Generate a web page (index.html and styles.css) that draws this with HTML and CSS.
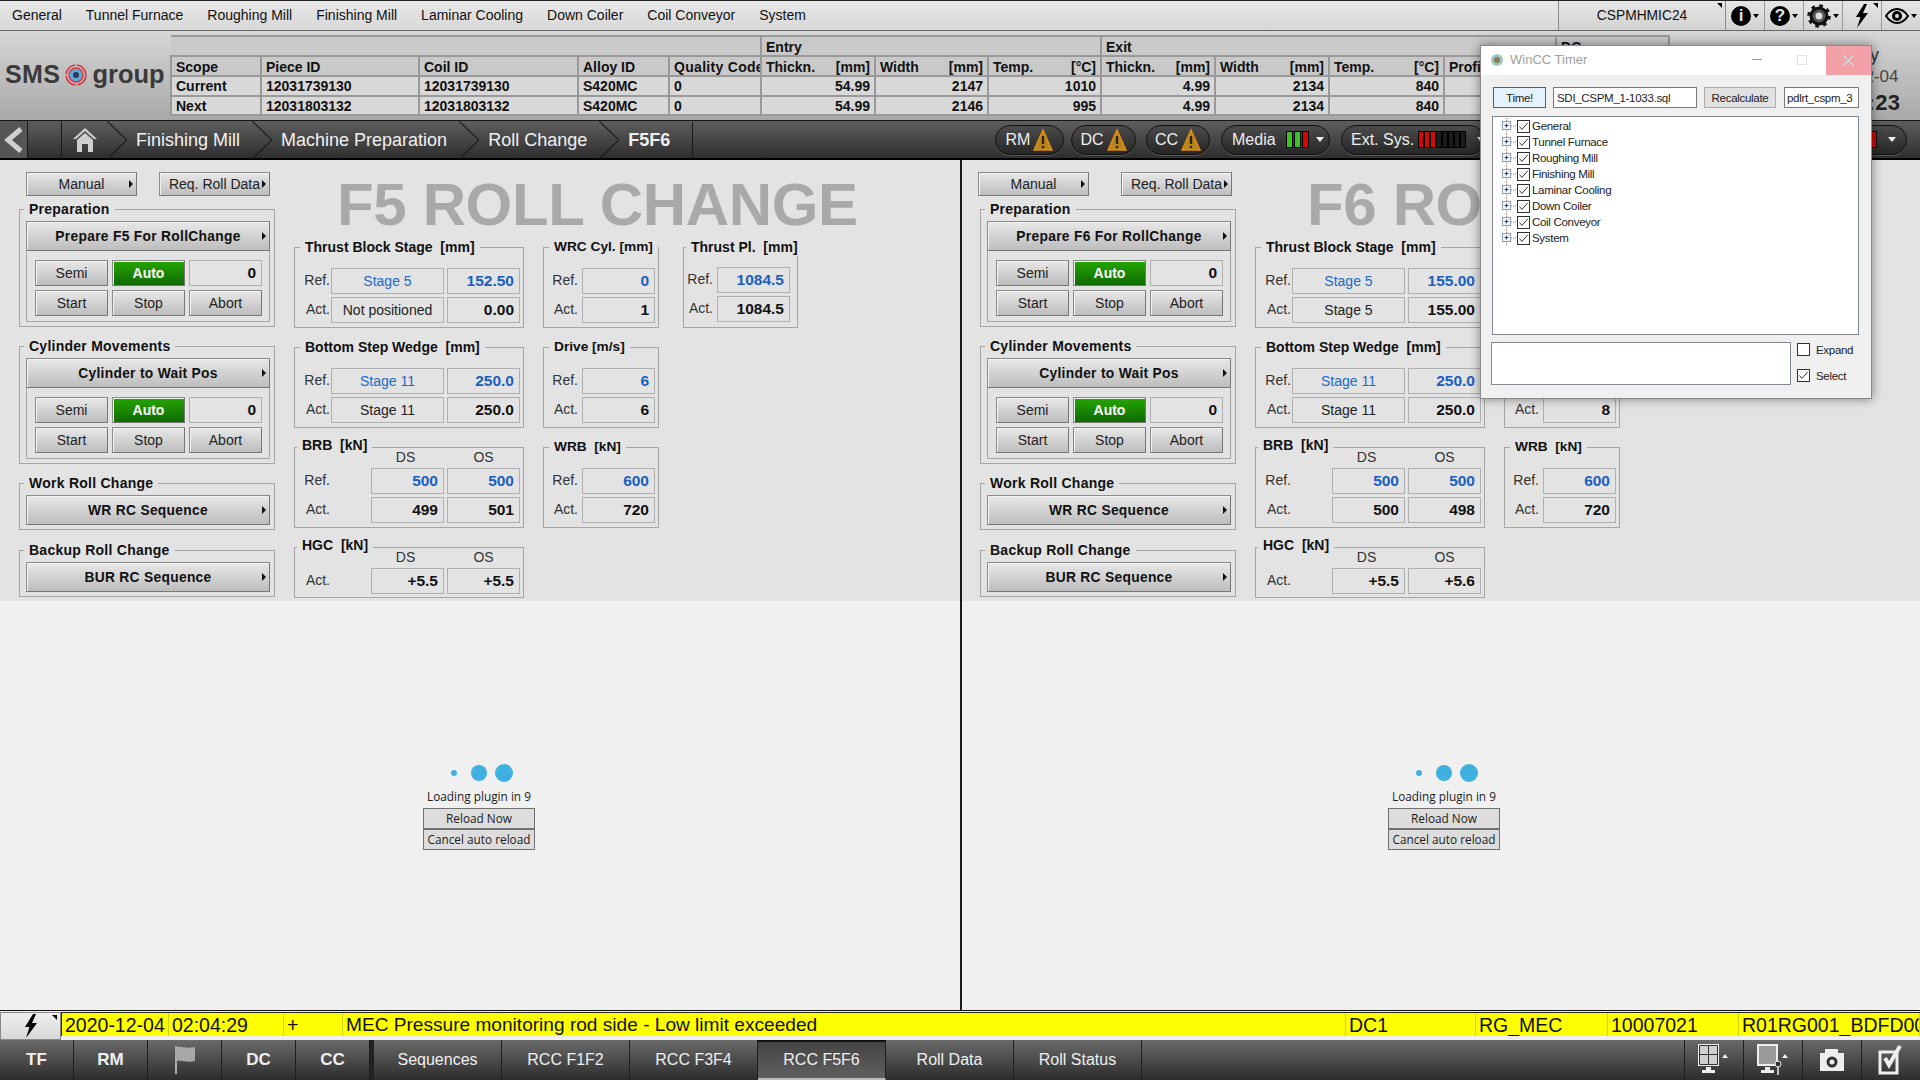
FILE: index.html
```html
<!DOCTYPE html>
<html lang="en">
<head>
<meta charset="utf-8">
<title>F5F6 Roll Change</title>
<link rel="stylesheet" href="styles.css">
</head>
<body>
<svg class="defs" width="0" height="0" aria-hidden="true">
  <symbol id="warn" viewBox="0 0 20 22"><path d="M10 1 19 21H1Z" fill="#b9851c" stroke="#e08a12" stroke-width="1.5"/><path d="M10 7v8" stroke="#2b2410" stroke-width="2.4"/><circle cx="10" cy="18" r="1.3" fill="#2b2410"/></symbol>
  <symbol id="bolt" viewBox="0 0 14 24"><path d="M9 0 1 13h4.500L2 24 13 9H8L12 0Z" fill="#000"/></symbol>
  <symbol id="tree" viewBox="0 0 14 16"><path d="M4.500 0v3.500M4.500 12.500V16M9 8h5" stroke="#888" stroke-dasharray="1 1" fill="none"/><rect x=".5" y="3.500" width="8" height="8" fill="#f4f4f4" stroke="#8f9db0"/><path d="M2.500 7.500h4M4.500 5.500v4" stroke="#2a3f90"/></symbol>
  <symbol id="chk" viewBox="0 0 13 13"><rect x=".5" y=".5" width="12" height="12" fill="#fff" stroke="#333"/><path d="M2.500 6.500 5 9.500 10.500 3" fill="none" stroke="#333"/></symbol>
  <symbol id="chev" viewBox="0 0 20 38"><path d="M0 0 20 19 0 38" fill="none" stroke="#1c1c1c" stroke-width="1.200"/></symbol>
</svg>
<div class="app">
  <header class="menu">
    <a class="mi">General</a><a class="mi">Tunnel Furnace</a><a class="mi">Roughing Mill</a><a class="mi">Finishing Mill</a><a class="mi">Laminar Cooling</a><a class="mi">Down Coiler</a><a class="mi">Coil Conveyor</a><a class="mi">System</a>
    <div class="host"><span>CSPMHMIC24</span></div>
    <div class="tool"><span class="round">i</span><i class="dn"></i></div>
    <div class="tool"><span class="round">?</span><i class="dn"></i></div>
    <div class="tool"><svg width="24" height="24" viewBox="0 0 24 24"><circle cx="12" cy="12" r="8" fill="#555" stroke="#111" stroke-width="3"/><circle cx="12" cy="12" r="10" fill="none" stroke="#111" stroke-width="3.500" stroke-dasharray="3.500 4.350"/><circle cx="12" cy="12" r="3.500" fill="#ddd"/></svg><i class="dn"></i></div>
    <div class="tool tool-corner"><svg width="14" height="24"><use href="#bolt"/></svg></div>
    <div class="tool"><svg width="24" height="16" viewBox="0 0 24 16"><path d="M1 8C5 2 9 1 12 1s7 1 11 7c-4 6-8 7-11 7S5 14 1 8Z" fill="none" stroke="#000" stroke-width="2"/><circle cx="12" cy="8" r="5" fill="#000"/><circle cx="12" cy="8" r="2" fill="#ddd"/></svg><i class="dn"></i></div>
  </header>

  <section class="band">
    <div class="logo">
      <span>SMS</span>
      <svg width="22" height="22" viewBox="0 0 22 22"><circle cx="11" cy="11" r="10" fill="none" stroke="#d8343c" stroke-width="1.600" stroke-dasharray="14 2"/><circle cx="11" cy="11" r="7" fill="#5fa8dc" stroke="#d8343c" stroke-width="1.500"/><circle cx="11" cy="11" r="3" fill="#2a3a50"/></svg>
      <span>group</span>
    </div>
    <table class="info">
      <colgroup><col class="c90"><col class="c158"><col class="c159"><col class="c91"><col class="c92"><col class="c114"><col class="c113"><col class="c113"><col class="c114"><col class="c114"><col class="c115"><col class="c112"><col class="c113"></colgroup>
      <tr class="g"><td colspan="5"></td><td colspan="3">Entry</td><td colspan="4">Exit</td><td>DC</td></tr>
      <tr class="h"><td>Scope</td><td>Piece ID</td><td>Coil ID</td><td>Alloy ID</td><td class="qc">Quality Code</td>
        <td><div class="hu"><span>Thickn.</span><span>[mm]</span></div></td><td><div class="hu"><span>Width</span><span>[mm]</span></div></td><td><div class="hu"><span>Temp.</span><span>[°C]</span></div></td>
        <td><div class="hu"><span>Thickn.</span><span>[mm]</span></div></td><td><div class="hu"><span>Width</span><span>[mm]</span></div></td><td><div class="hu"><span>Temp.</span><span>[°C]</span></div></td><td>Profile</td><td></td></tr>
      <tr><td>Current</td><td>12031739130</td><td>12031739130</td><td>S420MC</td><td>0</td><td class="r">54.99</td><td class="r">2147</td><td class="r">1010</td><td class="r">4.99</td><td class="r">2134</td><td class="r">840</td><td></td><td></td></tr>
      <tr><td>Next</td><td>12031803132</td><td>12031803132</td><td>S420MC</td><td>0</td><td class="r">54.99</td><td class="r">2146</td><td class="r">995</td><td class="r">4.99</td><td class="r">2134</td><td class="r">840</td><td></td><td></td></tr>
    </table>
    <div class="clock"><div class="c1">Today</div><div class="c2">2020-12-04</div><div class="c3">02:04:23</div></div>
  </section>

  <nav class="crumbs">
    <div class="back"><svg width="20" height="26" viewBox="0 0 20 26"><path d="M17 2 4 13l13 11" fill="none" stroke="#d0d0d0" stroke-width="5"/></svg></div>
    <div class="blank"></div>
    <svg class="home" width="26" height="26" viewBox="0 0 26 26"><path d="M13 1 1 12h3l9-8 9 8h3Z" fill="#cfcfcf"/><path d="M5 13 13 6l8 7v12h-5v-8h-6v8H5Z" fill="#cfcfcf"/></svg>
    <svg class="chev" width="20" height="38"><use href="#chev"/></svg>
    <span class="cr cr-a">Finishing Mill</span>
    <svg class="chev" width="20" height="38"><use href="#chev"/></svg>
    <span class="cr cr-b">Machine Preparation</span>
    <svg class="chev" width="20" height="38"><use href="#chev"/></svg>
    <span class="cr cr-c">Roll Change</span>
    <svg class="chev" width="20" height="38"><use href="#chev"/></svg>
    <span class="cr cr-d">F5F6</span>
    <div class="pills">
      <div class="pill p-rm">RM<svg width="20" height="22"><use href="#warn"/></svg></div>
      <div class="pill p-dc">DC<svg width="20" height="22"><use href="#warn"/></svg></div>
      <div class="pill p-cc">CC<svg width="20" height="22"><use href="#warn"/></svg></div>
      <div class="pill p-media">Media<span class="bars"><b class="gr"></b><b class="gr"></b><b class="rd"></b></span><i class="dnw"></i></div>
      <div class="pill p-ext">Ext. Sys.<span class="bars"><b class="rd"></b><b class="rd"></b><b class="rd"></b><b></b><b></b><b></b><b></b><b></b></span><i class="dnw"></i></div>
      <div class="pill p-last">Drives<span class="bars"><b class="rd"></b><b class="rd"></b></span><i class="dnw"></i></div>
    </div>
  </nav>

  <main class="panes">
    <div class="pane pane-l">
      <div class="ctrl">
        <div class="left-col">
          <div class="top-btns"><div class="btn mbtn tb"><span>Manual</span></div><div class="btn mbtn tb"><span>Req. Roll Data</span></div></div>
          <div class="grp g-op g-first"><div class="lg">Preparation</div><div class="btn mbtn big"><span>Prepare F5 For RollChange</span></div>
            <div class="inner"><div class="btn">Semi</div><div class="btn auto">Auto</div><div class="fld r b">0</div><div class="btn">Start</div><div class="btn">Stop</div><div class="btn">Abort</div></div></div>
          <div class="grp g-op"><div class="lg">Cylinder Movements</div><div class="btn mbtn big"><span>Cylinder to Wait Pos</span></div>
            <div class="inner"><div class="btn">Semi</div><div class="btn auto">Auto</div><div class="fld r b">0</div><div class="btn">Start</div><div class="btn">Stop</div><div class="btn">Abort</div></div></div>
          <div class="grp g-op g-short"><div class="lg">Work Roll Change</div><div class="btn mbtn big"><span>WR RC Sequence</span></div></div>
          <div class="grp g-op g-short"><div class="lg">Backup Roll Change</div><div class="btn mbtn big"><span>BUR RC Sequence</span></div></div>
        </div>
        <div class="right-area">
          <h1 class="title">F5 ROLL CHANGE</h1>
          <div class="cols">
            <div class="col col-a">
              <div class="grp v"><div class="lg">Thrust Block Stage&nbsp; [mm]</div>
                <div class="row"><span class="l">Ref.</span><div class="fs"><div class="fld c wide blue">Stage 5</div><div class="fld r b blue">152.50</div></div></div>
                <div class="row"><span class="l">Act.</span><div class="fs"><div class="fld c wide">Not positioned</div><div class="fld r b">0.00</div></div></div></div>
              <div class="grp v"><div class="lg">Bottom Step Wedge&nbsp; [mm]</div>
                <div class="row"><span class="l">Ref.</span><div class="fs"><div class="fld c wide blue">Stage 11</div><div class="fld r b blue">250.0</div></div></div>
                <div class="row"><span class="l">Act.</span><div class="fs"><div class="fld c wide">Stage 11</div><div class="fld r b">250.0</div></div></div></div>
              <div class="grp v"><div class="lg lg-up">BRB&nbsp; [kN]</div><div class="dsos"><span>DS</span><span>OS</span></div>
                <div class="row"><span class="l">Ref.</span><div class="fs"><div class="fld r b blue">500</div><div class="fld r b blue">500</div></div></div>
                <div class="row"><span class="l">Act.</span><div class="fs"><div class="fld r b">499</div><div class="fld r b">501</div></div></div></div>
              <div class="grp v v-short"><div class="lg lg-up">HGC&nbsp; [kN]</div><div class="dsos"><span>DS</span><span>OS</span></div>
                <div class="row"><span class="l">Act.</span><div class="fs"><div class="fld r b">+5.5</div><div class="fld r b">+5.5</div></div></div></div>
            </div>
            <div class="col col-b">
              <div class="grp v"><div class="lg">WRC Cyl. [mm]</div>
                <div class="row"><span class="l">Ref.</span><div class="fld r b blue">0</div></div>
                <div class="row"><span class="l">Act.</span><div class="fld r b">1</div></div></div>
              <div class="grp v"><div class="lg">Drive [m/s]</div>
                <div class="row"><span class="l">Ref.</span><div class="fld r b blue">6</div></div>
                <div class="row"><span class="l">Act.</span><div class="fld r b">6</div></div></div>
              <div class="grp v"><div class="lg">WRB&nbsp; [kN]</div>
                <div class="row"><span class="l">Ref.</span><div class="fld r b blue">600</div></div>
                <div class="row"><span class="l">Act.</span><div class="fld r b">720</div></div></div>
            </div>
            <div class="col col-c">
              <div class="grp v"><div class="lg">Thrust Pl.&nbsp; [mm]</div>
                <div class="row"><span class="l">Ref.</span><div class="fld r b blue">1084.5</div></div>
                <div class="row"><span class="l">Act.</span><div class="fld r b">1084.5</div></div></div>
            </div>
          </div>
        </div>
      </div>
      <div class="plugin">
        <div class="dots"><i class="d1"></i><i class="d2"></i><i class="d3"></i></div>
        <div class="lp">Loading plugin in 9</div>
        <div class="pb">Reload Now</div>
        <div class="pb">Cancel auto reload</div>
      </div>
    </div>
    <div class="divider"></div>
    <div class="pane pane-r">
      <div class="ctrl">
        <div class="left-col">
          <div class="top-btns"><div class="btn mbtn tb"><span>Manual</span></div><div class="btn mbtn tb"><span>Req. Roll Data</span></div></div>
          <div class="grp g-op g-first"><div class="lg">Preparation</div><div class="btn mbtn big"><span>Prepare F6 For RollChange</span></div>
            <div class="inner"><div class="btn">Semi</div><div class="btn auto">Auto</div><div class="fld r b">0</div><div class="btn">Start</div><div class="btn">Stop</div><div class="btn">Abort</div></div></div>
          <div class="grp g-op"><div class="lg">Cylinder Movements</div><div class="btn mbtn big"><span>Cylinder to Wait Pos</span></div>
            <div class="inner"><div class="btn">Semi</div><div class="btn auto">Auto</div><div class="fld r b">0</div><div class="btn">Start</div><div class="btn">Stop</div><div class="btn">Abort</div></div></div>
          <div class="grp g-op g-short"><div class="lg">Work Roll Change</div><div class="btn mbtn big"><span>WR RC Sequence</span></div></div>
          <div class="grp g-op g-short"><div class="lg">Backup Roll Change</div><div class="btn mbtn big"><span>BUR RC Sequence</span></div></div>
        </div>
        <div class="right-area">
          <h1 class="title">F6 ROLL CHANGE</h1>
          <div class="cols">
            <div class="col col-a">
              <div class="grp v"><div class="lg">Thrust Block Stage&nbsp; [mm]</div>
                <div class="row"><span class="l">Ref.</span><div class="fs"><div class="fld c wide blue">Stage 5</div><div class="fld r b blue">155.00</div></div></div>
                <div class="row"><span class="l">Act.</span><div class="fs"><div class="fld c wide">Stage 5</div><div class="fld r b">155.00</div></div></div></div>
              <div class="grp v"><div class="lg">Bottom Step Wedge&nbsp; [mm]</div>
                <div class="row"><span class="l">Ref.</span><div class="fs"><div class="fld c wide blue">Stage 11</div><div class="fld r b blue">250.0</div></div></div>
                <div class="row"><span class="l">Act.</span><div class="fs"><div class="fld c wide">Stage 11</div><div class="fld r b">250.0</div></div></div></div>
              <div class="grp v"><div class="lg lg-up">BRB&nbsp; [kN]</div><div class="dsos"><span>DS</span><span>OS</span></div>
                <div class="row"><span class="l">Ref.</span><div class="fs"><div class="fld r b blue">500</div><div class="fld r b blue">500</div></div></div>
                <div class="row"><span class="l">Act.</span><div class="fs"><div class="fld r b">500</div><div class="fld r b">498</div></div></div></div>
              <div class="grp v v-short"><div class="lg lg-up">HGC&nbsp; [kN]</div><div class="dsos"><span>DS</span><span>OS</span></div>
                <div class="row"><span class="l">Act.</span><div class="fs"><div class="fld r b">+5.5</div><div class="fld r b">+5.6</div></div></div></div>
            </div>
            <div class="col col-b">
              <div class="grp v"><div class="lg">WRC Cyl. [mm]</div>
                <div class="row"><span class="l">Ref.</span><div class="fld r b blue">0</div></div>
                <div class="row"><span class="l">Act.</span><div class="fld r b">1</div></div></div>
              <div class="grp v"><div class="lg">Drive [m/s]</div>
                <div class="row"><span class="l">Ref.</span><div class="fld r b blue">8</div></div>
                <div class="row"><span class="l">Act.</span><div class="fld r b">8</div></div></div>
              <div class="grp v"><div class="lg">WRB&nbsp; [kN]</div>
                <div class="row"><span class="l">Ref.</span><div class="fld r b blue">600</div></div>
                <div class="row"><span class="l">Act.</span><div class="fld r b">720</div></div></div>
            </div>
          </div>
        </div>
      </div>
      <div class="plugin">
        <div class="dots"><i class="d1"></i><i class="d2"></i><i class="d3"></i></div>
        <div class="lp">Loading plugin in 9</div>
        <div class="pb">Reload Now</div>
        <div class="pb">Cancel auto reload</div>
      </div>
    </div>
  </main>

  <section class="status">
    <div class="st-btn"><svg width="14" height="24"><use href="#bolt"/></svg></div>
    <div class="st-row">
      <span class="s1">2020-12-04</span><span class="s2">02:04:29</span><span class="s3">+</span><span class="s4">MEC Pressure monitoring rod side - Low limit exceeded</span><span class="s5">DC1</span><span class="s6">RG_MEC</span><span class="s7">10007021</span><span class="s8">R01RG001_BDFD001</span>
    </div>
  </section>

  <footer class="tabs">
    <div class="tab t-s b">TF</div><div class="tab t-s b">RM</div>
    <div class="tab t-s"><svg width="22" height="28" viewBox="0 0 22 28"><path d="M2 0v28" stroke="#a8a8a8" stroke-width="2"/><path d="M3 1c6-1 8 2 18 0v14c-8 2-12-1-18 0Z" fill="#a8a8a8"/></svg></div>
    <div class="tab t-s b">DC</div><div class="tab t-s b">CC</div>
    <div class="tab-gap"></div>
    <div class="tab t-l">Sequences</div><div class="tab t-l">RCC F1F2</div><div class="tab t-l">RCC F3F4</div><div class="tab t-l active">RCC F5F6</div><div class="tab t-l">Roll Data</div><div class="tab t-l">Roll Status</div>
    <div class="tab-fill"></div>
    <div class="tab t-i"><svg width="34" height="34" viewBox="0 0 34 34"><rect x="1" y="1" width="21" height="22" fill="#eee"/><path d="M3 3h8v8H3ZM12 3h8v8h-8ZM3 12h8v9H3ZM12 12h8v9h-8Z" fill="#cfcfcf"/><path d="M2.500 2.500h18v19h-18ZM11.500 2.500v19M2.500 11.500h18" fill="none" stroke="#333"/><path d="M9 24h5v3h4v3H5v-3h4Z" fill="#eee"/><path d="M28 11l3 4h-6Z" fill="#eee"/></svg></div>
    <div class="tab t-i"><svg width="34" height="34" viewBox="0 0 34 34"><rect x="1" y="1" width="21" height="22" fill="#eee"/><rect x="3" y="3" width="17" height="18" fill="#9a9a9a"/><path d="M9 24h5v3h4v3H5v-3h4Z" fill="#eee"/><circle cx="22" cy="21" r="3" fill="#333" stroke="#eee"/><path d="M22 24v8" stroke="#eee" stroke-width="1.500"/><path d="M29 11l3 4h-6Z" fill="#eee"/></svg></div>
    <div class="tab t-i"><svg width="26" height="24" viewBox="0 0 26 24"><path d="M1 5h5V1h13v4h6v18H1Z" fill="#eee"/><circle cx="13" cy="14" r="5.500" fill="#333"/><circle cx="13" cy="14" r="2.500" fill="#eee"/></svg></div>
    <div class="tab t-i"><svg width="26" height="30" viewBox="0 0 26 30"><path d="M2 7h17v21H2Z" fill="none" stroke="#eee" stroke-width="3"/><path d="M7 13l4 7L22 1" fill="none" stroke="#eee" stroke-width="4"/></svg></div>
  </footer>

  <aside class="window">
    <div class="w-title">
      <svg width="14" height="14" viewBox="0 0 14 14"><circle cx="7" cy="7" r="6" fill="#9cc7c4"/><circle cx="7" cy="7" r="3" fill="#8a7d52"/></svg>
      <span class="w-name">WinCC Timer</span>
      <i class="w-min"></i><i class="w-max"></i>
      <div class="w-close"><svg width="11" height="11" viewBox="0 0 11 11"><path d="M.5.5l10 10M10.500.5l-10 10" stroke="#fff"/></svg></div>
    </div>
    <div class="w-body">
      <div class="w-row">
        <div class="w-btn w-time">Time!</div>
        <div class="w-in w-in1">SDI_CSPM_1-1033.sql</div>
        <div class="w-btn w-rec">Recalculate</div>
        <div class="w-in w-in2">pdlrt_cspm_3</div>
      </div>
      <div class="w-tree">
        <div class="t-row"><svg width="14" height="16"><use href="#tree"/></svg><svg width="13" height="13"><use href="#chk"/></svg><span>General</span></div>
        <div class="t-row"><svg width="14" height="16"><use href="#tree"/></svg><svg width="13" height="13"><use href="#chk"/></svg><span>Tunnel Furnace</span></div>
        <div class="t-row"><svg width="14" height="16"><use href="#tree"/></svg><svg width="13" height="13"><use href="#chk"/></svg><span>Roughing Mill</span></div>
        <div class="t-row"><svg width="14" height="16"><use href="#tree"/></svg><svg width="13" height="13"><use href="#chk"/></svg><span>Finishing Mill</span></div>
        <div class="t-row"><svg width="14" height="16"><use href="#tree"/></svg><svg width="13" height="13"><use href="#chk"/></svg><span>Laminar Cooling</span></div>
        <div class="t-row"><svg width="14" height="16"><use href="#tree"/></svg><svg width="13" height="13"><use href="#chk"/></svg><span>Down Coiler</span></div>
        <div class="t-row"><svg width="14" height="16"><use href="#tree"/></svg><svg width="13" height="13"><use href="#chk"/></svg><span>Coil Conveyor</span></div>
        <div class="t-row"><svg width="14" height="16"><use href="#tree"/></svg><svg width="13" height="13"><use href="#chk"/></svg><span>System</span></div>
      </div>
      <div class="w-foot">
        <div class="w-box"></div>
        <div class="w-checks">
          <div class="w-chk"><i class="cb"></i><span>Expand</span></div>
          <div class="w-chk"><svg width="13" height="13"><use href="#chk"/></svg><span>Select</span></div>
        </div>
      </div>
    </div>
  </aside>
</div>
</body>
</html>
```

FILE: styles.css
```css
* { box-sizing: border-box; }
html, body { margin: 0; padding: 0; }
body { width: 1920px; height: 1080px; overflow: hidden; font-family: "Liberation Sans", Arial, sans-serif; color: #111; }
.defs { display: block; height: 0; }
.app { position: relative; width: 1920px; height: 1080px; display: flex; flex-direction: column; background: #e3e3e3; }

/* top menu */
.menu { height: 31px; flex: none; display: flex; align-items: stretch; background: linear-gradient(#e8e8e8, #d8d8d8); border-top: 1px solid #222; border-bottom: 1px solid #666; padding-left: 0; }
.mi { display: flex; align-items: center; padding: 0 12px; font-size: 14px; color: #111; padding-bottom: 1px; }
.host { margin-left: auto; width: 168px; display: flex; align-items: center; justify-content: center; border-left: 1px solid #8a8a8a; border-right: 1px solid #8a8a8a; font-size: 13.800px; background: linear-gradient(#e6e6e6, #d2d2d2); position: relative; }
.host::after, .tool-corner::after { content: ""; position: absolute; top: 2px; right: 3px; border-top: 5px solid #000; border-left: 5px solid transparent; }
.tool { width: 39px; display: flex; align-items: center; justify-content: center; gap: 2px; border-right: 1px solid #9a9a9a; background: linear-gradient(#e6e6e6, #d2d2d2); position: relative; }
.tool:last-child { width: 38px; border-right: 0; }
.round { width: 20px; height: 20px; border-radius: 50%; background: #000; color: #e4e4e4; font-weight: bold; font-size: 17px; line-height: 20px; text-align: center; }
.dn { width: 0; height: 0; border-top: 4px solid #000; border-left: 3px solid transparent; border-right: 3px solid transparent; }

/* header band */
.band { height: 89px; flex: none; display: flex; align-items: flex-start; padding-top: 4px; background: linear-gradient(#d6d6d6, #a8a8a8); }
.logo { width: 170px; flex: none; height: 79px; display: flex; align-items: center; gap: 5px; padding-left: 5px; font-weight: bold; font-size: 25px; letter-spacing: .4px; color: #3a3a3a; }
.logo span:last-child { font-size: 25.500px; letter-spacing: 0; }
.info { width: 1498px; flex: none; table-layout: fixed; border-collapse: collapse; font-size: 14px; font-weight: bold; color: #111; }
.info td { height: 20px; padding: 0 4px; border: 2px solid #999; background: #d8d8d8; white-space: nowrap; overflow: hidden; }
.info tr:last-child td { height: 19px; }
.info .g td, .info .h td { background: #c9c9c9; padding-top: 2px; }
.info tr.g td:first-child { border-left: 0; }
.info td.r { text-align: right; }
.info td.qc { letter-spacing: .3px; padding-right: 0; }
.hu { display: flex; justify-content: space-between; }
.c90 { width: 90px; } .c158 { width: 158px; } .c159 { width: 159px; } .c91 { width: 91px; } .c92 { width: 92px; } .c114 { width: 114px; } .c113 { width: 113px; } .c115 { width: 115px; } .c112 { width: 112px; }
.clock { margin-left: auto; width: 130px; text-align: center; color: #333; }
.c1 { font-size: 18px; line-height: 22px; margin-top: 9px; }
.c2 { font-size: 17px; line-height: 22px; color: #444; }
.c3 { font-size: 22px; font-weight: bold; line-height: 30px; letter-spacing: .3px; color: #222; }

/* breadcrumb */
.crumbs { height: 40px; flex: none; display: flex; align-items: center; background: linear-gradient(#5e5e5e, #2e2e2e); border-top: 1px solid #151515; border-bottom: 2px solid #000; color: #f0f0f0; }
.back { width: 28px; height: 100%; display: flex; align-items: center; justify-content: center; background: #555; border-right: 1px solid #1a1a1a; }
.blank { width: 34px; height: 100%; border-right: 1px solid #1a1a1a; }
.home { margin-left: 10px; margin-right: 9px; }
.chev { flex: none; }
.cr { font-size: 18px; margin: 1px 12px 0 9px; white-space: nowrap; }
.cr-d { font-weight: bold; padding-right: 22px; margin-right: 0; border-right: 1px solid #1a1a1a; height: 100%; display: flex; align-items: center; }
.pills { margin-left: auto; height: 100%; display: flex; align-items: center; padding-right: 13px; }
.pill { flex: none; white-space: nowrap; height: 30px; border-radius: 15px; border: 1px solid #111; background: linear-gradient(#4c4c4c, #262626); display: flex; align-items: center; justify-content: center; gap: 3px; font-size: 16px; color: #eee; box-shadow: 0 1px 0 #555; }
.p-rm { width: 69px; } .p-dc { width: 65px; margin-left: 7px; } .p-cc { width: 64px; margin-left: 10px; }
.p-media { width: 109px; margin-left: 11px; gap: 10px; justify-content: flex-start; padding-left: 10px; } .p-media .bars b { width: 7px; } .p-media .dnw { margin-left: -3px; }
.p-ext { width: 144px; margin-left: 11px; gap: 4px; justify-content: flex-start; padding-left: 9px; } .p-ext .bars { gap: 0; } .p-ext .dnw { margin-left: 7px; }
.p-last { width: 139px; margin-left: 283px; gap: 6px; justify-content: flex-end; padding-right: 10px; }
.bars { display: flex; gap: 1px; flex: none; }
.bars b { flex: none; width: 6px; height: 17px; background: #1c1c1c; border: 1px solid #000; }
.bars .gr { background: #3cc02c; } .bars .rd { background: #d00808; }
.dnw { flex: none; width: 0; height: 0; margin-left: 5px; border-top: 5px solid #eee; border-left: 4px solid transparent; border-right: 4px solid transparent; }

/* panes */
.panes { height: 850px; flex: none; display: flex; background: #f0f0f0; }
.pane { display: flex; flex-direction: column; }
.pane-l { width: 960px; }
.pane-r { flex: 1; min-width: 0; }
.divider { width: 2px; background: #1a1a1a; flex: none; }
.ctrl { height: 441px; flex: none; display: flex; background: #e3e3e3; padding-top: 12px; }
.pane-l .ctrl { padding-left: 19px; }
.pane-r .ctrl { padding-left: 18px; }
.left-col { width: 256px; flex: none; }
.top-btns { display: flex; gap: 22px; padding-left: 7px; height: 24px; margin-bottom: 13px; }
.pane-r .top-btns { padding-left: 0; margin-left: -2px; gap: 32px; }
.pane-r .right-area { margin-left: 19px; }
.pane-l .right-area { margin-left: 19px; }

.btn { display: flex; align-items: center; justify-content: center; height: 26px; font-size: 14px; color: #222; background: linear-gradient(#e8e8e8, #bdbdbd); border: 1px solid #8c8c8c; border-bottom-color: #777; border-right-color: #777; box-shadow: inset 1px 1px 0 #f2f2f2; }
.mbtn { padding: 0 3px; }
.mbtn span { flex: 1; text-align: center; white-space: nowrap; }
.mbtn::before { content: ""; width: 4px; flex: none; }
.mbtn::after { content: ""; flex: none; width: 0; height: 0; border-left: 4px solid #111; border-top: 4px solid transparent; border-bottom: 4px solid transparent; }
.tb { width: 111px; height: 24px; font-size: 14px; }
.big { width: 244px; height: 30px; font-weight: bold; font-size: 13.800px; color: #111; letter-spacing: .3px; }
.auto { background: linear-gradient(#25a600, #0f6a00); color: #fff; font-weight: bold; }

.grp { position: relative; border: 1px solid #a6a6a6; background: #e3e3e3; }
.lg { display: table; height: 18px; line-height: 18px; margin: -10px 0 1px 5px; padding: 0 5px; background: #e3e3e3; font-weight: bold; font-size: 14px; letter-spacing: 0; color: #111; white-space: nowrap; }
.lg-up { margin-top: -12px; margin-bottom: 3px; margin-left: 2px; }
.g-op { padding-left: 6px; margin-bottom: 19px; height: 118px; }
.g-op .lg { margin-bottom: 3px; margin-left: -2px; letter-spacing: .25px; }
.g-op.g-short { height: 47px; margin-bottom: 20px; }
.inner { width: 244px; height: 71px; border: 1px solid #a6a6a6; border-top: 0; padding: 9px 0 0 8px; display: grid; grid-template-columns: repeat(3, 73px); grid-auto-rows: 26px; gap: 4px; }

.right-area { flex: none; }
.title { margin: 0 0 0 43px; height: 75px; font-size: 60px; line-height: 66px; letter-spacing: -.35px; font-weight: bold; color: #a9a9a9; white-space: nowrap; }
.pane-r .title { margin-left: 52px; }
.cols { display: flex; align-items: flex-start; }
.col { display: flex; flex-direction: column; gap: 19px; }
.col-a { width: 230px; }
.col-b { width: 116px; margin-left: 19px; }
.col-b .lg { font-size: 13.700px; }
.col-c { width: 115px; margin-left: 24px; }
.col-c .lg { margin-left: 2px; }
.v { height: 81px; }
.v-short { height: 51px; }
.v > .lg + .row { margin-top: 12px; }
.row { display: flex; justify-content: space-between; align-items: center; height: 26px; margin-bottom: 3px; padding-right: 3px; }
.col-c .row { padding-right: 7px; }
.col-c .v > .lg + .row { margin-top: 11px; }
.l { width: 36px; text-align: right; padding-right: 1px; font-size: 14px; color: #333; margin-top: -3px; }
.col-b .l { width: 34px; padding-right: 0; }
.col-c .l { width: 29px; padding-right: 0; }
.fs { display: flex; gap: 3px; }
.dsos { display: flex; justify-content: flex-end; margin-top: -9px; height: 20px; padding-right: 3px; font-size: 14px; line-height: 19px; color: #333; }
.dsos span { width: 73px; text-align: center; margin-left: 3px; padding-right: 4px; }
.dsos span:last-child { padding-right: 0; }
.fld { width: 73px; height: 26px; display: flex; align-items: center; border: 1px solid #b0b0b0; font-size: 14px; color: #222; padding: 0 5px; }
.fld.wide { width: 113px; }
.fld.c { justify-content: center; white-space: nowrap; }
.fld.r { justify-content: flex-end; }
.fld.b { font-weight: bold; font-size: 15.500px; color: #111; }
.fld.blue { color: #2069c8; }
.fld.b.blue { color: #1a5fc0; }

/* plugin */
.plugin { flex: 1; display: flex; flex-direction: column; align-items: center; padding-top: 162px; font-family: "Open Sans", sans-serif; font-size: 11.800px; color: #1c1c1c; }
.pane-l .plugin { padding-right: 2px; }
.pane-r .plugin { padding-left: 6px; }
.dots { height: 20px; display: flex; align-items: center; margin-left: 6px; }
.dots i { display: block; border-radius: 50%; background: #3fb0e0; }
.d1 { width: 6px; height: 6px; } .d2 { width: 16px; height: 16px; margin-left: 14px; } .d3 { width: 18px; height: 18px; margin-left: 8px; }
.lp { height: 25px; line-height: 26px; }
.pb { width: 112px; height: 21px; line-height: 19px; text-align: center; background: #dddddd; border: 1px solid #707070; white-space: nowrap; }

/* status */
.status { height: 30px; flex: none; display: flex; background: #f0f0f0; border-top: 1px solid #111; padding-top: 1px; }
.st-btn { width: 61px; display: flex; align-items: center; justify-content: center; background: linear-gradient(#eee, #d8d8d8); border: 1px solid #888; position: relative; }
.st-btn::after { content: ""; position: absolute; top: 2px; right: 3px; border-top: 5px solid #000; border-left: 5px solid transparent; }
.st-row { flex: 1; min-width: 0; height: 24px; margin-top: 0; display: flex; overflow: hidden; background: #ffff00; font-size: 19.500px; line-height: 24px; color: #111; border-top: 1px solid #222; border-left: 1px solid #222; }
.st-row span { flex: none; padding-left: 3px; white-space: nowrap; overflow: hidden; border-right: 1px solid #cfcf20; }
.s1 { width: 107px; } .s2 { width: 115px; } .s3 { width: 59px; } .st-row .s4 { width: 1003px; font-size: 19.100px; } .s5 { width: 130px; } .s6 { width: 132px; } .s7 { width: 131px; } .s8 { width: 181px; }

/* tabs */
.tabs { height: 40px; flex: none; display: flex; background: linear-gradient(#6a6a6a, #2c2c2c); color: #efefef; }
.tab { display: flex; align-items: center; justify-content: center; font-size: 16px; border-right: 1px solid #1e1e1e; flex: none; }
.t-s { width: 74px; font-size: 17px; }
.tab.b { font-weight: bold; }
.tab-gap { width: 4px; flex: none; background: #222; }
.t-l { width: 128px; }
.active { background: linear-gradient(#444, #606060); border-bottom: 2px solid #bbb; border-top: 2px solid #111; }
.tab-fill { flex: 1; }
.t-i { width: 59px; border-right: 0; border-left: 1px solid #1e1e1e; }

/* floating window */
.window { position: absolute; left: 1480px; top: 45px; width: 392px; height: 354px; background: #f0f0f0; border: 1px solid #8a8a8a; box-shadow: 0 0 10px rgba(0,0,0,.45); font-size: 11.500px; letter-spacing: -.3px; color: #222; display: flex; flex-direction: column; }
.w-title { height: 29px; flex: none; background: #fff; display: flex; align-items: center; padding: 0 0 2px 9px; }
.w-name { margin-left: 6px; font-size: 13px; color: #a0a0a0; letter-spacing: 0; }
.w-min { margin-left: auto; width: 10px; height: 1px; background: #999; }
.w-max { margin-left: 35px; width: 10px; height: 10px; border: 1px solid #e0e0e0; }
.w-close { margin-left: 19px; width: 45px; height: 29px; margin-bottom: -2px; background: #f4a0a8; display: flex; align-items: center; justify-content: center; }
.w-body { flex: 1; padding: 12px 12px 0 11px; display: flex; flex-direction: column; }
.w-row { display: flex; height: 21px; padding-left: 1px; gap: 7px; margin-bottom: 8px; }
.w-btn, .w-in { display: flex; align-items: center; white-space: nowrap; overflow: hidden; }
.w-btn { justify-content: center; }
.w-time { width: 53px; background: #e5f1fb; border: 1px solid #0078d7; }
.w-rec { width: 72px; background: #e1e1e1; border: 1px solid #adadad; }
.w-in { background: #fff; border: 1px solid #7a7a7a; padding-left: 3px; }
.w-in1 { width: 144px; } .w-in2 { width: 75px; margin-left: 1px; padding-left: 2px; }
.w-tree { width: 367px; height: 219px; background: #fff; border: 1px solid #828790; padding: 1px 0 0 9px; flex: none; }
.t-row { height: 16px; display: flex; align-items: center; gap: 1px; }
.t-row svg { flex: none; }
.t-row span { margin-left: 1px; }
.w-foot { display: flex; margin-top: 7px; margin-left: -1px; }
.w-box { width: 300px; height: 43px; background: #fff; border: 1px solid #828790; flex: none; }
.w-checks { margin-left: 6px; display: flex; flex-direction: column; gap: 13px; margin-top: 1px; }
.w-chk { display: flex; align-items: center; gap: 6px; height: 13px; font-size: 11.500px; }
.cb { display: block; width: 13px; height: 13px; background: #fff; border: 1px solid #333; }
```
